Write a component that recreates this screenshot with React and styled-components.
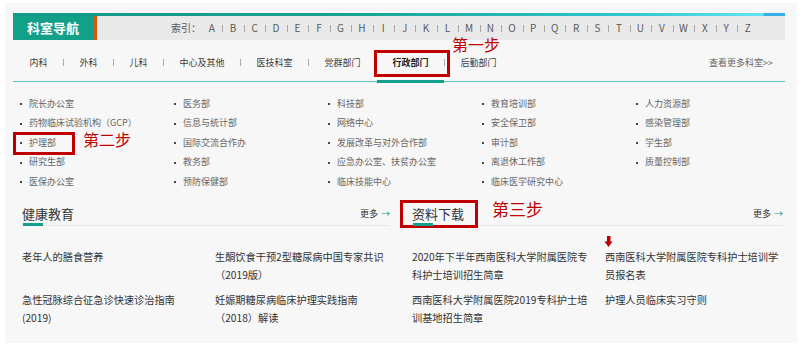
import React from "react";
import styled, { createGlobalStyle } from "styled-components";

const GlobalStyle = createGlobalStyle`
  html, body {
    margin: 0;
    padding: 0;
    background: #ffffff;
  }
  body {
    font-family: "Noto Sans CJK SC", "Noto Sans", sans-serif;
  }
  ul {
    list-style: none;
    margin: 0;
    padding: 0;
  }
`;

const Panel = styled.div`
  box-sizing: border-box;
  width: 792px;
  height: 340px;
  margin: 3px 0 0 5px;
  padding: 10px 12px 0 8px;
  background: #f7f7f7;
`;

const TopLine = styled.div`
  height: 3px;
  background: linear-gradient(
    90deg,
    #139a86 0%,
    #14a08c 40%,
    #2fc6d0 80%,
    #62e4f6 97%,
    #3aaee6 97.4%,
    #3aaee6 100%
  );
`;

const NavBar = styled.div`
  display: flex;
  height: 24px;
  background: #e9e9e9;
`;

const NavTitle = styled.div`
  box-sizing: border-box;
  width: 84px;
  padding-left: 14px;
  border-right: 3px solid #d35a0b;
  background: #13a089;
  color: #ffffff;
  font-size: 13px;
  font-weight: bold;
  line-height: 24px;
`;

const IndexBox = styled.div`
  display: flex;
  align-items: center;
  margin-left: 74px;
  font-size: 10px;
  line-height: 12px;
  color: #5a5a5a;
`;

const IndexLabel = styled.div`
  width: 30px;
  white-space: nowrap;
`;

const Letter = styled.span`
  position: relative;
  width: 21.44px;
  text-align: center;

  & + &::before {
    content: "";
    position: absolute;
    left: 0;
    top: 3px;
    width: 1px;
    height: 7px;
    background: #a8a8a8;
  }
`;

const Tabs = styled.div`
  display: flex;
  height: 41px;
  padding-left: 1px;
  border-bottom: 1px solid #5ec2b7;
`;

const Tab = styled.div`
  position: relative;
  display: flex;
  align-items: center;
  padding: 3px 15.5px 0;
  font-size: 9px;
  color: ${({ $active }) => ($active ? "#1d1d1d" : "#3a3a3a")};
  font-weight: ${({ $active }) => ($active ? "bold" : "normal")};

  &::after {
    content: "";
    display: ${({ $active }) => ($active ? "block" : "none")};
    position: absolute;
    left: 0;
    right: 0;
    bottom: -2px;
    height: 3px;
    background: #139e89;
  }
`;

const Sep = styled.span`
  align-self: center;
  margin-top: 3px;
  width: 1px;
  height: 7px;
  background: #aaa;
`;

const MoreDepts = styled.div`
  display: flex;
  align-items: center;
  margin-left: auto;
  margin-right: 12px;
  padding-top: 3px;
  font-size: 9px;
  color: #666;
`;

const MarkBox = styled.span`
  position: absolute;
  box-sizing: border-box;
  left: ${({ $l }) => $l}px;
  top: ${({ $t }) => $t}px;
  width: ${({ $w }) => $w}px;
  height: ${({ $h }) => $h}px;
  border: 3px solid #c00000;
  pointer-events: none;
`;

const StepLabel = styled.span`
  position: absolute;
  left: ${({ $l }) => $l}px;
  top: ${({ $t }) => $t}px;
  font-size: ${({ $size }) => $size || 16}px;
  line-height: 1;
  font-weight: normal;
  color: #c00000;
  white-space: nowrap;
`;

const DeptGrid = styled.ul`
  display: grid;
  grid-auto-flow: column;
  grid-template-rows: repeat(5, 19.5px);
  grid-template-columns: repeat(5, 154px);
  margin-top: 12px !important;
  padding-left: 4px !important;
`;

const Dept = styled.li`
  position: relative;
  display: flex;
  align-items: center;
  padding-left: 12px;
  font-size: 9px;
  line-height: 12px;
  color: #666;

  &::before {
    content: "";
    position: absolute;
    left: 3px;
    top: 9px;
    width: 2px;
    height: 2px;
    background: #444;
  }
`;

const Sections = styled.div`
  display: grid;
  grid-template-columns: 368px 371px;
  column-gap: 22px;
  margin-top: 12px;
  padding-left: 9px;
`;

const SectionHead = styled.div`
  display: flex;
  justify-content: space-between;
  align-items: center;
  height: 20px;
  padding-bottom: 1px;
  border-bottom: 1px solid #e8e8e8;
`;

const SectionTitle = styled.h3`
  position: relative;
  margin: 0;
  font-size: 13px;
  font-weight: normal;
  line-height: 20px;
  color: #333;

  &::after {
    content: "";
    position: absolute;
    left: 1px;
    bottom: -2px;
    width: 20px;
    height: 3px;
    background: #139e89;
  }
`;

const More = styled.a`
  font-size: 9px;
  color: #333;
  text-decoration: none;

  span {
    margin-left: 3px;
    color: #13a089;
  }
`;

const ItemGrid = styled.ul`
  display: grid;
  grid-template-columns: 180px 180px;
  column-gap: 13px;
  row-gap: 7px;
  margin-top: 22px !important;
`;

const Item = styled.li`
  position: relative;
  font-size: 10.2px;
  line-height: 18px;
  color: #333;
`;

const DownArrow = styled.svg`
  position: absolute;
  left: -1px;
  top: -12px;
`;

const tabs = ["内科", "外科", "儿科", "中心及其他", "医技科室", "党群部门", "行政部门", "后勤部门"];

const letters = "ABCDEFGHIJKLMNOPQRSTUVWXYZ".split("");

const depts = [
  "院长办公室", "药物临床试验机构（GCP）", "护理部", "研究生部", "医保办公室",
  "医务部", "信息与统计部", "国际交流合作办", "教务部", "预防保健部",
  "科技部", "网络中心", "发展改革与对外合作部", "应急办公室、扶贫办公室", "临床技能中心",
  "教育培训部", "安全保卫部", "审计部", "离退休工作部", "临床医学研究中心",
  "人力资源部", "感染管理部", "学生部", "质量控制部",
];

const health = [
  "老年人的膳食营养",
  "生酮饮食干预2型糖尿病中国专家共识（2019版）",
  "急性冠脉综合征急诊快速诊治指南(2019)",
  "妊娠期糖尿病临床护理实践指南（2018）解读",
];

const downloads = [
  "2020年下半年西南医科大学附属医院专科护士培训招生简章",
  "西南医科大学附属医院专科护士培训学员报名表",
  "西南医科大学附属医院2019专科护士培训基地招生简章",
  "护理人员临床实习守则",
];

export default function App() {
  return (
    <>
      <GlobalStyle />
      <Panel>
        <TopLine />
        <NavBar>
          <NavTitle>科室导航</NavTitle>
          <IndexBox>
            <IndexLabel>索引：</IndexLabel>
            {letters.map((l) => (
              <Letter key={l}>{l}</Letter>
            ))}
          </IndexBox>
        </NavBar>

        <Tabs>
          {tabs.map((t, i) => (
            <React.Fragment key={t}>
              {i > 0 && <Sep />}
              <Tab $active={t === "行政部门"}>
                {t}
                {t === "行政部门" && (
                  <>
                    <MarkBox $l={-3} $t={10} $w={76} $h={27} />
                    <StepLabel $l={75} $t={-4}>第一步</StepLabel>
                  </>
                )}
              </Tab>
            </React.Fragment>
          ))}
          <MoreDepts>查看更多科室&gt;&gt;</MoreDepts>
        </Tabs>

        <DeptGrid>
          {depts.map((d) => (
            <Dept key={d}>
              {d}
              {d === "护理部" && (
                <>
                  <MarkBox $l={-4} $t={-1} $w={62} $h={23} />
                  <StepLabel $l={66} $t={-2}>第二步</StepLabel>
                </>
              )}
            </Dept>
          ))}
        </DeptGrid>

        <Sections>
          <section>
            <SectionHead>
              <SectionTitle>健康教育</SectionTitle>
              <More href="#">更多<span>→</span></More>
            </SectionHead>
            <ItemGrid>
              {health.map((h) => (
                <Item key={h}>{h}</Item>
              ))}
            </ItemGrid>
          </section>
          <section>
            <SectionHead>
              <SectionTitle>
                资料下载
                <MarkBox $l={-12} $t={-4} $w={78} $h={28} />
                <StepLabel $l={80} $t={-4} $size={17}>第三步</StepLabel>
              </SectionTitle>
              <More href="#">更多<span>→</span></More>
            </SectionHead>
            <ItemGrid>
              {downloads.map((d, i) => (
                <Item key={d}>
                  {i === 1 && (
                    <DownArrow width="9" height="11" viewBox="0 0 9 11">
                      <rect x="3" y="0" width="3.5" height="6" fill="#c00000" />
                      <polygon points="0.5,5.5 8.5,5.5 4.5,11" fill="#c00000" />
                    </DownArrow>
                  )}
                  {d}
                </Item>
              ))}
            </ItemGrid>
          </section>
        </Sections>
      </Panel>
    </>
  );
}
